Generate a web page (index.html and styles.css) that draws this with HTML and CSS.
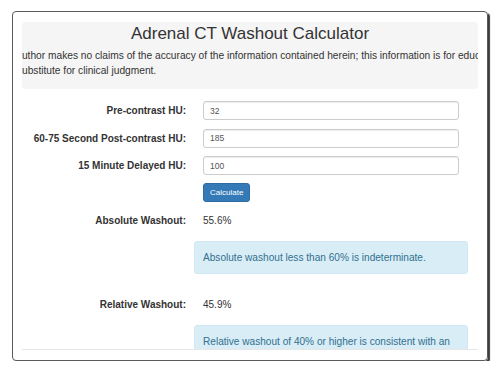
FILE: index.html
```html
<!DOCTYPE html>
<html lang="en">
<head>
    <meta charset="UTF-8">
    <meta name="viewport" content="width=device-width, initial-scale=1.0">
    <title>Adrenal CT Washout Calculator</title>
    <link rel="stylesheet" href="styles.css">
</head>
<body>
    <div class="window">
        <div class="viewport">
            <div class="jumbotron">
                <h1>Adrenal CT Washout Calculator</h1>
                <p class="disclaimer">
                    <span class="line line-first">The author makes no claims of the accuracy of the information contained herein; this information is for educational purposes only and is not a</span>
                    <span class="line line-second">substitute for clinical judgment.</span>
                </p>
            </div>

            <form class="calc" onsubmit="return false;">
                <div class="row field-row">
                    <label for="pre">Pre-contrast HU:</label>
                    <input type="text" id="pre" value="32">
                </div>
                <div class="row field-row">
                    <label for="post">60-75 Second Post-contrast HU:</label>
                    <input type="text" id="post" value="185">
                </div>
                <div class="row field-row">
                    <label for="delayed">15 Minute Delayed HU:</label>
                    <input type="text" id="delayed" value="100">
                </div>
                <div class="row button-row">
                    <span></span>
                    <button type="button">Calculate</button>
                </div>
            </form>

            <div class="results">
                <div class="row result-row">
                    <span class="result-label">Absolute Washout:</span>
                    <span class="result-value">55.6%</span>
                </div>
                <div class="row alert-row">
                    <span></span>
                    <div class="alert">Absolute washout less than 60% is indeterminate.</div>
                </div>
                <div class="row result-row">
                    <span class="result-label">Relative Washout:</span>
                    <span class="result-value">45.9%</span>
                </div>
                <div class="row alert-row">
                    <span></span>
                    <div class="alert">Relative washout of 40% or higher is consistent with an adenoma.</div>
                </div>
            </div>
        </div>
    </div>
</body>
</html>
```

FILE: styles.css
```css
body {
    margin: 0;
    font-family: "Liberation Sans", Arial, sans-serif;
    color: #333;
    background-color: #fff;
}
.window {
    margin: 11px 0 0 12px;
    width: 456px;
    padding: 10px 9px;
    border: 1px solid #5a5a5a;
    border-radius: 4px;
    box-shadow: 2px 2px 1px #3c3c3c;
}
.viewport {
    height: 327px;
    overflow: hidden;
    border-bottom: 1px solid #e6e6e6;
}
.jumbotron {
    box-sizing: border-box;
    height: 67px;
    padding-top: 2px;
    overflow: hidden;
    background-color: #f5f5f5;
    border-radius: 4px;
}
h1 {
    margin: 0;
    font-size: 17px;
    line-height: 20px;
    font-weight: normal;
    text-align: center;
}
.disclaimer {
    margin: 4px 0 0;
    font-size: 10.2px;
    line-height: 15px;
}
.line {
    display: block;
    white-space: nowrap;
}
.line-first {
    margin-left: -2.56em;
}
.line-second {
    margin-left: -0.5em;
}
.calc {
    margin-top: 12px;
}
.row {
    display: grid;
    grid-template-columns: 164px 1fr;
    column-gap: 17px;
    align-items: center;
}
.field-row {
    margin-bottom: 8.5px;
}
label, .result-label {
    font-size: 10px;
    line-height: 15px;
    font-weight: bold;
    text-align: right;
}
input {
    box-sizing: border-box;
    width: 256px;
    height: 19px;
    padding: 0 6px;
    border: 1px solid #ccc;
    border-radius: 3px;
    box-shadow: inset 0 1px 1px rgba(0, 0, 0, 0.075);
    font-family: inherit;
    font-size: 8.5px;
    color: #555;
}
button {
    justify-self: start;
    height: 19px;
    padding: 0 6px;
    background-color: #337ab7;
    border: 1px solid #2e6da4;
    border-radius: 3px;
    color: #fff;
    font-family: inherit;
    font-size: 8px;
    cursor: pointer;
}
.button-row {
    margin-top: -0.5px;
}
.results {
    margin-top: 11px;
}
.result-row + .alert-row {
    margin-top: 13px;
}
.alert-row + .result-row {
    margin-top: 23px;
}
.result-value {
    font-size: 10px;
    line-height: 15px;
}
.alert {
    box-sizing: border-box;
    width: 274px;
    margin-left: -9px;
    padding: 8px;
    background-color: #d9edf7;
    border: 1px solid #d0e8f3;
    border-radius: 3px;
    color: #31708f;
    font-size: 10.1px;
    line-height: 15px;
}
```
